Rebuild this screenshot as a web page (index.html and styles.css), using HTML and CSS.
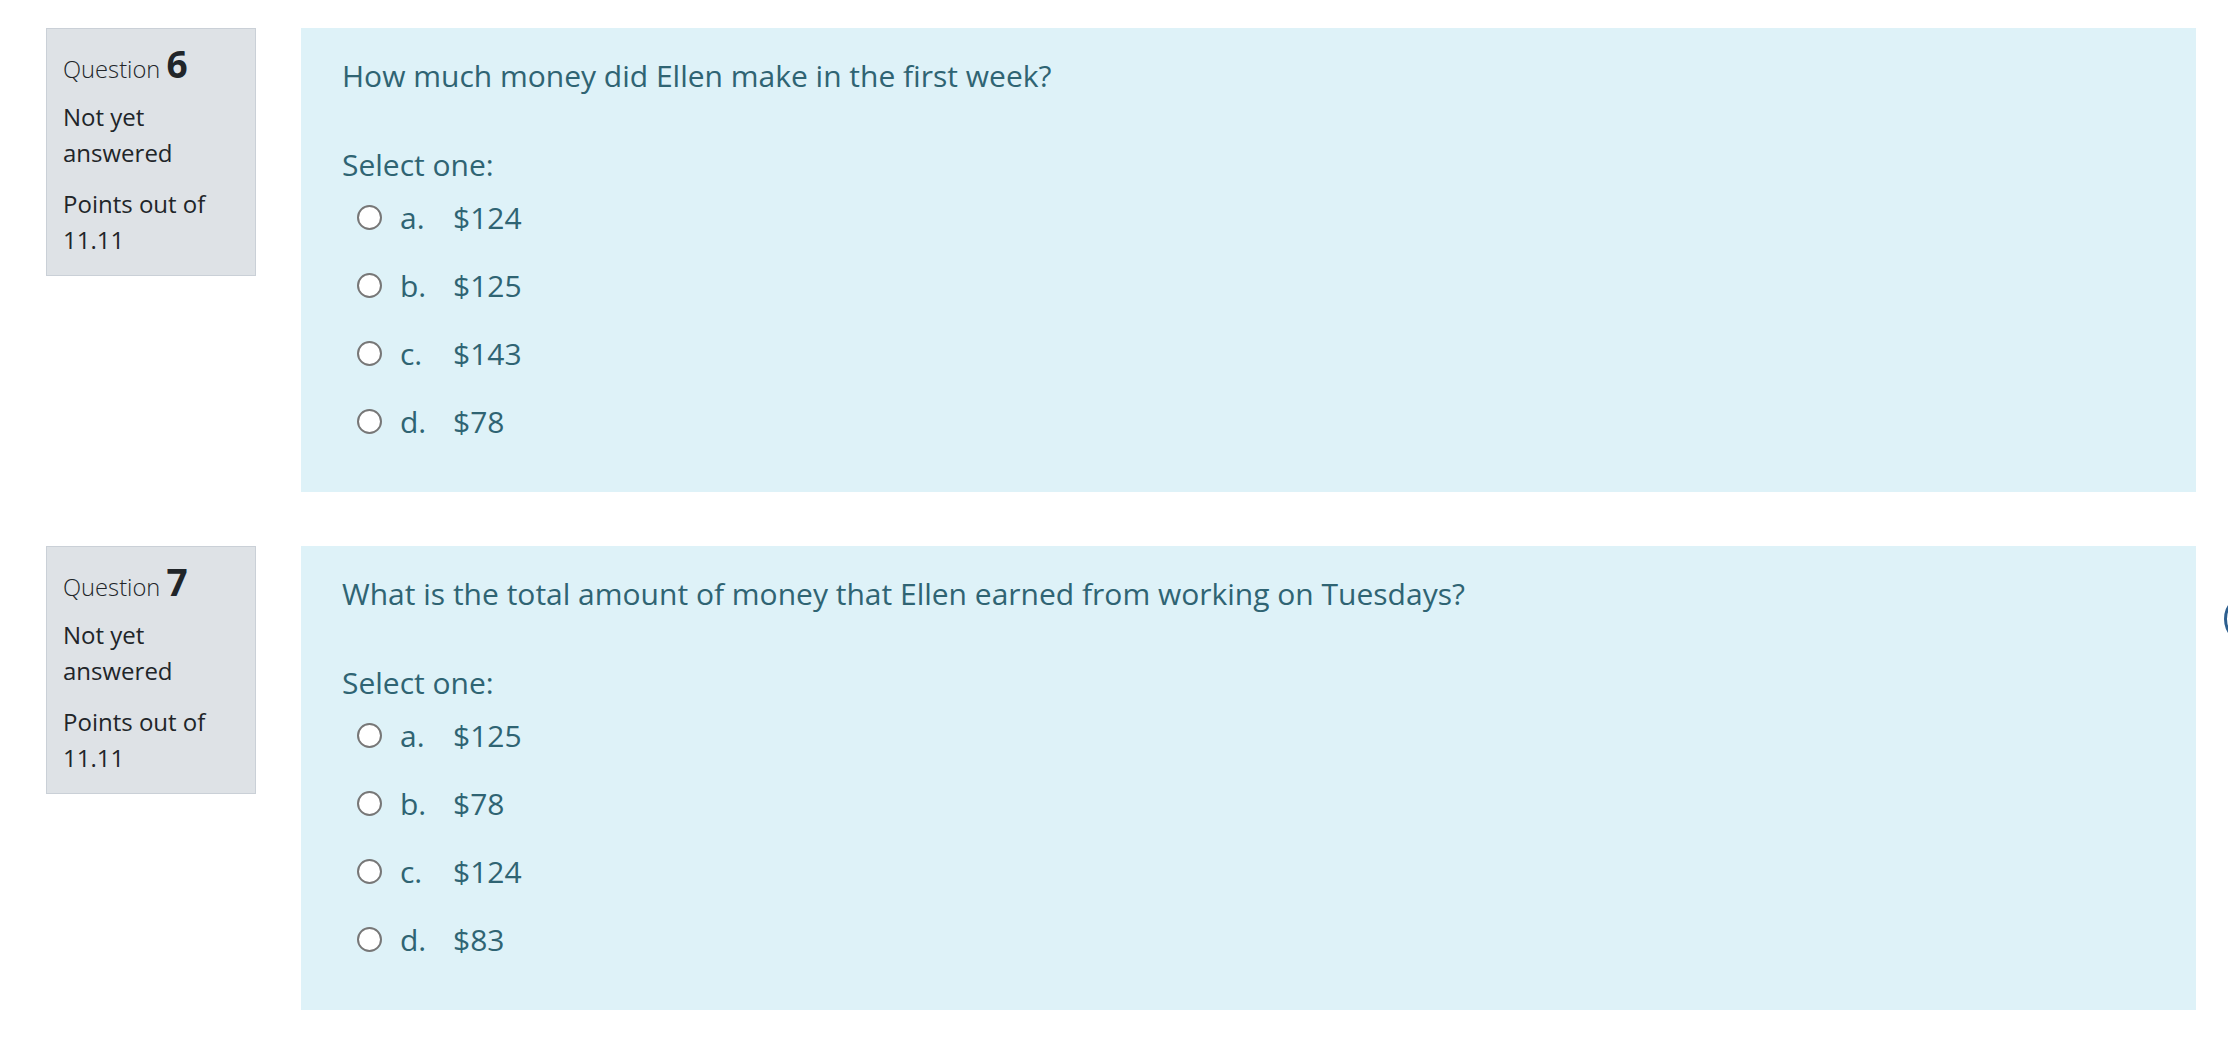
FILE: index.html
```html
<!DOCTYPE html>
<html lang="en">
<head>
<meta charset="utf-8">
<title>Quiz</title>
<link rel="stylesheet" href="styles.css">
</head>
<body>
<div class="page">
  <div class="que">
    <div class="info">
      <h3 class="no">Question <span class="qno">6</span></h3>
      <div class="state">Not yet answered</div>
      <div class="grade">Points out of 11.11</div>
    </div>
    <div class="formulation">
      <div class="qtext">How much money did Ellen make in the first week?</div>
      <div class="prompt">Select one:</div>
      <div class="answer">
        <label class="opt"><input type="radio" name="q6"><span class="letter">a.</span><span>$124</span></label>
        <label class="opt"><input type="radio" name="q6"><span class="letter">b.</span><span>$125</span></label>
        <label class="opt"><input type="radio" name="q6"><span class="letter">c.</span><span>$143</span></label>
        <label class="opt"><input type="radio" name="q6"><span class="letter">d.</span><span>$78</span></label>
      </div>
    </div>
  </div>
  <div class="que">
    <div class="info">
      <h3 class="no">Question <span class="qno">7</span></h3>
      <div class="state">Not yet answered</div>
      <div class="grade">Points out of 11.11</div>
    </div>
    <div class="formulation">
      <div class="qtext">What is the total amount of money that Ellen earned from working on Tuesdays?</div>
      <div class="prompt">Select one:</div>
      <div class="answer">
        <label class="opt"><input type="radio" name="q7"><span class="letter">a.</span><span>$125</span></label>
        <label class="opt"><input type="radio" name="q7"><span class="letter">b.</span><span>$78</span></label>
        <label class="opt"><input type="radio" name="q7"><span class="letter">c.</span><span>$124</span></label>
        <label class="opt"><input type="radio" name="q7"><span class="letter">d.</span><span>$83</span></label>
      </div>
    </div>
  </div>
</div>
<div class="fab"></div>
</body>
</html>
```
FILE: styles.css
```css
html, body {
  margin: 0;
  padding: 0;
  background: #ffffff;
}
body {
  font-family: "Open Sans", "Noto Sans", sans-serif;
  color: #212529;
  overflow: hidden;
}
.page {
  padding: 28px 0 0 46px;
}
.que {
  display: flex;
  align-items: flex-start;
  gap: 45px;
  margin-bottom: 54px;
}
.info {
  box-sizing: border-box;
  width: 210px;
  flex: none;
  background: #dee2e6;
  border: 1px solid #cad0d7;
  padding: 16px 16px 18px 16px;
}
.no {
  margin: 0;
  font-size: 23.7px;
  line-height: 1;
  font-weight: 300;
  color: #212529;
}
.qno {
  font-size: 37px;
  line-height: 1;
  font-weight: 700;
}
.state, .grade {
  font-size: 24px;
  line-height: 35.5px;
  color: #212529;
}
.state {
  margin-top: 17px;
}
.grade {
  margin-top: 16px;
}
.formulation {
  box-sizing: border-box;
  width: 1895px;
  flex: none;
  background: #def2f8;
  color: #2f6473;
  padding: 25px 41px 48px 41px;
  font-size: 30px;
  line-height: 45px;
}
.prompt {
  margin-top: 44px;
}
.answer {
  margin-top: 8px;
  display: flex;
  flex-direction: column;
  gap: 23px;
  padding-left: 15px;
}
.opt {
  display: flex;
  align-items: center;
  height: 45px;
}
.opt input {
  -webkit-appearance: none;
  appearance: none;
  box-sizing: border-box;
  width: 25px;
  height: 25px;
  margin: 0 18px 0 0;
  border: 2px solid #777777;
  border-radius: 50%;
  background: #ffffff;
}
.letter {
  width: 53px;
}
.fab {
  position: fixed;
  left: 2224px;
  top: 592px;
  width: 54px;
  height: 54px;
  box-sizing: border-box;
  border: 3px solid #2d5f8f;
  border-radius: 50%;
  background: #ffffff;
}
```
